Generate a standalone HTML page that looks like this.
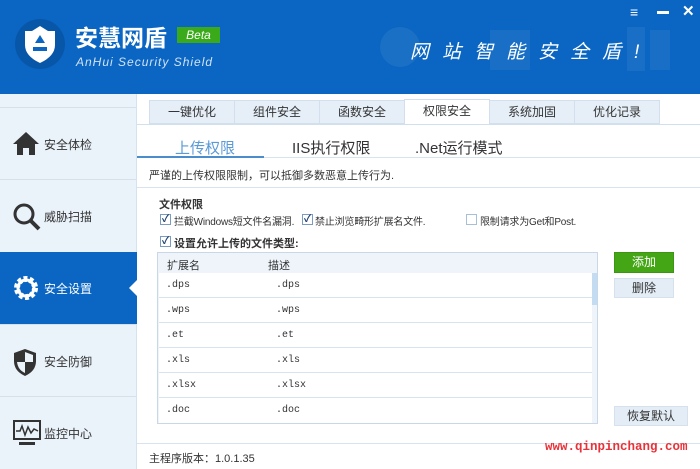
<!DOCTYPE html>
<html><head><meta charset="utf-8"><style>
*{margin:0;padding:0;box-sizing:border-box}
body{width:700px;height:469px;overflow:hidden;background:#fff;font-family:"Liberation Sans","Noto Sans CJK SC",sans-serif;font-size:12px;color:#333;position:relative}
.a{position:absolute}
.hdr{left:0;top:0;width:700px;height:94px;background:#0a66c2}
.side{left:0;top:94px;width:137px;height:375px;background:#eaf2fa;border-right:1px solid #d6e2ee}
.item{position:absolute;left:0;width:137px;height:72px;border-top:1px solid #d6e0ea;font-size:12px;color:#333}
.item span{position:absolute;left:44px;top:28px}
.item svg{position:absolute;left:13px;top:23px}
.tab{position:absolute;top:100px;height:24px;width:86px;background:#e6eff8;border:1px solid #d2dfec;text-align:center;line-height:22px;font-size:12px;color:#333}
.cb{position:absolute;width:11px;height:11px;border:1px solid #7a9cc0;background:#fff;font-size:10px;line-height:9px;text-align:center;color:#1a3a6a;font-weight:bold}
.row{position:absolute;left:159px;width:433px;height:25px;border-bottom:1px solid #d8e3ee;font-family:"Liberation Mono",monospace;font-size:10px;line-height:25px;background:#fff}
.row i{position:absolute;font-style:normal}
.btn{position:absolute;background:#e4edf6;border:1px solid #d5e1ec;text-align:center;font-size:12px;line-height:19px;color:#333}
.s{font-size:10px;letter-spacing:-0.2px}
</style></head><body>
<div class="a hdr"></div>
<svg class="a" style="left:14px;top:18px" width="52" height="52" viewBox="0 0 52 52"><circle cx="26" cy="26" r="25" fill="#0856a8"/><path d="M26 8 L34 13 L41 13 L41 27 Q41 38 26 45 Q11 38 11 27 L11 13 L18 13 Z" fill="#fff"/><path d="M26 17 L31 25 L21 25 Z" fill="#0a66c2"/><rect x="19" y="29" width="14" height="4" fill="#0a66c2"/></svg>
<div class="a" style="left:75px;top:24px;color:#fff;font-size:23px;font-weight:bold;line-height:28px">安慧网盾</div>
<div class="a" style="left:177px;top:27px;width:43px;height:16px;background:#3aaa1a;color:#fff;font-size:12px;font-style:italic;text-align:center;line-height:16px">Beta</div>
<div class="a" style="left:76px;top:55px;color:#d0e2f5;font-size:12px;font-style:italic;letter-spacing:1px">AnHui Security Shield</div>
<svg class="a" style="left:375px;top:25px" width="300" height="50"><circle cx="25" cy="22" r="20" fill="#3a85cc" opacity=".35"/><rect x="115" y="5" width="40" height="40" fill="#3a85cc" opacity=".3"/><rect x="275" y="5" width="20" height="40" fill="#3a85cc" opacity=".3"/><rect x="252" y="2" width="18" height="44" fill="#3a85cc" opacity=".3"/></svg>
<div class="a" style="left:410px;top:37px;color:#fff;font-size:19px;font-style:italic;letter-spacing:13px">网站智能安全盾!</div>
<div class="a" style="left:630px;top:4px;color:#fff;font-size:14px;font-weight:bold">≡</div>
<div class="a" style="left:657px;top:11px;width:12px;height:3px;background:#fff"></div>
<div class="a" style="left:682px;top:2px;color:#fff;font-size:15px;font-weight:bold">✕</div>

<div class="a side"></div>
<div class="item" style="top:107px"><svg width="26" height="24" viewBox="0 0 26 24"><path d="M13 1 L26 13 L22 13 L22 24 L16 24 L16 17 L10 17 L10 24 L4 24 L4 13 L0 13 Z" fill="#333"/></svg><span>安全体检</span></div>
<div class="item" style="top:179px"><svg width="28" height="28" viewBox="0 0 28 28"><circle cx="11" cy="11" r="9" fill="none" stroke="#333" stroke-width="3"/><path d="M18 18 L26 26" stroke="#333" stroke-width="4"/></svg><span>威胁扫描</span></div>
<div class="item" style="top:252px;background:#0a66c2;color:#fff;border-top:none"><svg width="26" height="26" viewBox="0 0 26 26"><circle cx="13" cy="13" r="9" fill="none" stroke="#fff" stroke-width="6" stroke-dasharray="3.5 2.2"/><circle cx="13" cy="13" r="8" fill="none" stroke="#fff" stroke-width="3"/></svg><span>安全设置</span></div>
<div class="a" style="left:129px;top:280px;width:0;height:0;border-top:8px solid transparent;border-bottom:8px solid transparent;border-right:8px solid #fff"></div>
<div class="item" style="top:324px"><svg width="24" height="28" viewBox="0 0 24 28"><path d="M12 1 L23 5 L23 13 Q23 23 12 28 Q1 23 1 13 L1 5 Z" fill="#333"/><path d="M12 4 L12 14 L20 14 L20 7 Z M12 14 L4 14 Q5 22 12 25 Z" fill="#eaf2fa"/></svg><span>安全防御</span></div>
<div class="item" style="top:396px"><svg width="28" height="26" viewBox="0 0 28 26"><rect x="1" y="1" width="26" height="18" fill="none" stroke="#333" stroke-width="2"/><path d="M3 11 L7 11 L9 6 L12 15 L15 7 L18 13 L21 9 L25 11" fill="none" stroke="#333" stroke-width="1.5"/><rect x="6" y="22" width="16" height="3" fill="#333"/></svg><span>监控中心</span></div>

<div class="tab" style="left:149px">一键优化</div>
<div class="tab" style="left:234px">组件安全</div>
<div class="tab" style="left:319px">函数安全</div>
<div class="tab" style="left:404px;background:#fff;border-bottom-color:#fff;top:99px;height:26px">权限安全</div>
<div class="tab" style="left:489px">系统加固</div>
<div class="tab" style="left:574px">优化记录</div>
<div class="a" style="left:137px;top:124px;width:563px;height:1px;background:#d2dfec"></div>

<div class="a" style="left:175px;top:137px;font-size:15px;color:#5a9ad6">上传权限</div>
<div class="a" style="left:292px;top:137px;font-size:15px;color:#333">IIS执行权限</div>
<div class="a" style="left:415px;top:137px;font-size:15px;color:#333">.Net运行模式</div>
<div class="a" style="left:137px;top:157px;width:563px;height:1px;background:#d8e3ee"></div>
<div class="a" style="left:137px;top:156px;width:127px;height:2px;background:#4a8ccc"></div>
<div class="a" style="left:149px;top:167px;font-size:11px">严谨的上传权限限制，可以抵御多数恶意上传行为.</div>
<div class="a" style="left:137px;top:187px;width:563px;height:1px;background:#d8e3ee"></div>
<div class="a" style="left:159px;top:196px;font-size:11px;font-weight:bold">文件权限</div>
<div class="cb" style="left:160px;top:214px">✓</div><div class="a s" style="left:174px;top:213px">拦截Windows短文件名漏洞.</div>
<div class="cb" style="left:302px;top:214px">✓</div><div class="a s" style="left:315px;top:213px">禁止浏览畸形扩展名文件.</div>
<div class="cb" style="left:466px;top:214px;border-color:#a8bfd8"></div><div class="a s" style="left:480px;top:213px">限制请求为Get和Post.</div>
<div class="cb" style="left:160px;top:236px">✓</div><div class="a" style="left:174px;top:235px;font-size:11px;font-weight:bold">设置允许上传的文件类型:</div>

<div class="a" style="left:157px;top:252px;width:441px;height:172px;border:1px solid #c8d8e8;background:#eef4fa"></div>
<div class="a" style="left:167px;top:257px;font-size:11px">扩展名</div>
<div class="a" style="left:268px;top:257px;font-size:11px">描述</div>
<div class="row" style="top:273px"><i style="left:7px">.dps</i><i style="left:117px">.dps</i></div>
<div class="row" style="top:298px"><i style="left:7px">.wps</i><i style="left:117px">.wps</i></div>
<div class="row" style="top:323px"><i style="left:7px">.et</i><i style="left:117px">.et</i></div>
<div class="row" style="top:348px"><i style="left:7px">.xls</i><i style="left:117px">.xls</i></div>
<div class="row" style="top:373px"><i style="left:7px">.xlsx</i><i style="left:117px">.xlsx</i></div>
<div class="row" style="top:398px;height:25px;border-bottom:none"><i style="left:7px">.doc</i><i style="left:117px">.doc</i></div>
<div class="a" style="left:592px;top:273px;width:5px;height:150px;background:#eef4fa"></div>
<div class="a" style="left:592px;top:273px;width:5px;height:32px;background:#c4dcf2"></div>

<div class="btn" style="left:614px;top:252px;width:60px;height:21px;background:#45a615;border-color:#3d9612;color:#fff">添加</div>
<div class="btn" style="left:614px;top:278px;width:60px;height:20px">删除</div>
<div class="btn" style="left:614px;top:406px;width:74px;height:20px">恢复默认</div>

<div class="a" style="left:137px;top:443px;width:563px;height:1px;background:#d8e3ee"></div>
<div class="a" style="left:149px;top:450px;font-size:11px">主程序版本：1.0.1.35</div>
<div class="a" style="left:545px;top:440px;font-size:12.5px;font-weight:bold;color:#e8323a;font-family:'Liberation Mono',monospace">www.qinpinchang.com</div>
</body></html>
